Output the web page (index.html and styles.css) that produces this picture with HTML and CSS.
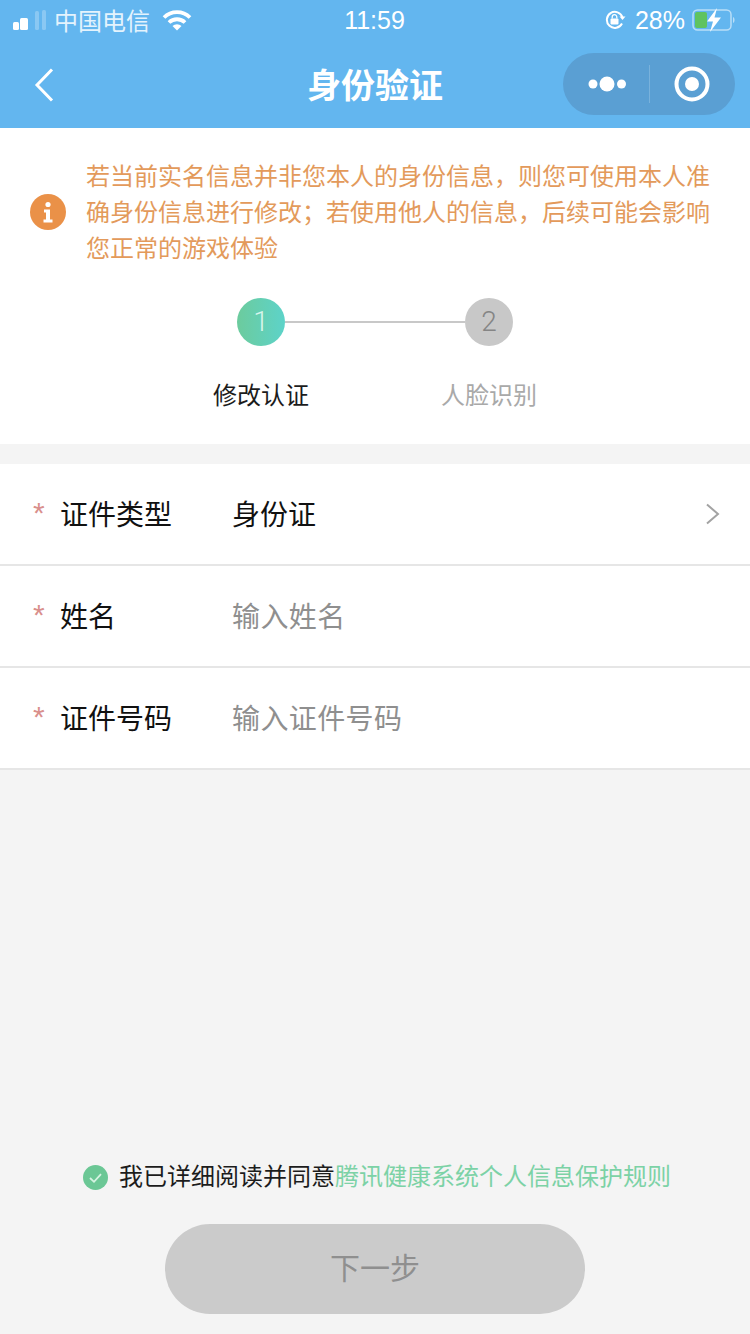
FILE: index.html
```html
<!DOCTYPE html>
<html>
	<head>
		<meta charset="utf-8">
		<title>身份验证</title>
		<link rel="stylesheet" href="styles.css">
	</head>
	<body>
		<div class="page">
			<header class="top">
				<div class="status">
					<div class="status-left">
						<svg class="signal" width="33" height="20" viewBox="0 0 33 20">
							<rect x="0" y="12" width="6" height="8" rx="1.5" fill="#fff"/>
							<rect x="7" y="8" width="8" height="12" rx="1.5" fill="#fff"/>
							<rect x="22" y="1" width="4" height="19" rx="1.5" fill="#fff" opacity=".25"/>
							<rect x="29" y="0" width="4" height="20" rx="1.5" fill="#fff" opacity=".25"/>
						</svg>
						<span class="carrier">中国电信</span>
						<svg class="wifi" width="30" height="22" viewBox="0 0 30 22">
							<path d="M2 8.500a18.500 18.500 0 0 1 26 0" fill="none" stroke="#fff" stroke-width="3.800"/>
							<path d="M7 13.500a11.500 11.500 0 0 1 16 0" fill="none" stroke="#fff" stroke-width="3.800"/>
							<path d="M15 21.500l-4.500-4.500a6.400 6.400 0 0 1 9 0z" fill="#fff"/>
						</svg>
					</div>
					<div class="clock">11:59</div>
					<div class="status-right">
						<svg class="lock" width="22" height="20" viewBox="0 0 22 20">
							<path d="M18 13.500a8 8 0 1 1 .5-6" fill="none" stroke="#fff" stroke-width="2"/>
							<path d="M15.500 6.500h6l-3 3.500z" fill="#fff"/>
							<rect x="6.500" y="8.500" width="8" height="6" rx="1" fill="#fff"/>
							<path d="M8.200 8.500v-1.500a2.300 2.300 0 0 1 4.600 0v1.500" fill="none" stroke="#fff" stroke-width="1.300"/>
						</svg>
						<span class="percent">28%</span>
						<svg class="battery" width="44" height="24" viewBox="0 0 44 24">
							<rect x="1" y="2" width="38" height="20" rx="4.500" fill="none" stroke="#fff" stroke-opacity=".55" stroke-width="1.500"/>
							<rect x="3" y="4" width="12" height="16" rx="2" fill="#5fc35f"/>
							<path d="M41 9c2 .5 2 5.500 0 6z" fill="#fff" fill-opacity=".55"/>
							<path d="M25 0l-10 13.500h6l-3 10.500 11-14.500h-6.500z" fill="#fff"/>
						</svg>
					</div>
				</div>
				<nav class="navbar">
					<div class="nav-left">
						<svg class="back" width="20" height="34" viewBox="0 0 20 34">
							<path d="M18 1.500L3 17l15 15.500" fill="none" stroke="#fff" stroke-width="3"/>
						</svg>
					</div>
					<h1 class="nav-title">身份验证</h1>
					<div class="nav-right">
						<div class="capsule">
							<svg class="capsule-more" width="40" height="18" viewBox="0 0 40 18">
								<circle cx="5" cy="9" r="4.500" fill="#fff"/>
								<circle cx="19" cy="9" r="7.500" fill="#fff"/>
								<circle cx="33.500" cy="9" r="4.500" fill="#fff"/>
							</svg>
							<span class="capsule-line"></span>
							<svg class="capsule-target" width="36" height="36" viewBox="0 0 36 36">
								<circle cx="18" cy="18" r="15.500" fill="none" stroke="#fff" stroke-width="4"/>
								<circle cx="18" cy="18" r="7" fill="#fff"/>
							</svg>
						</div>
					</div>
				</nav>
			</header>

			<section class="intro">
				<div class="notice">
					<svg class="notice-icon" width="36" height="36" viewBox="0 0 36 36">
						<circle cx="18" cy="18" r="18" fill="#ea9148"/>
						<circle cx="18" cy="10.500" r="2.600" fill="#fff"/>
						<path d="M14 15.500h6v10h2.500v3h-9v-3H16v-7h-2z" fill="#fff"/>
					</svg>
					<p class="notice-text">若当前实名信息并非您本人的身份信息，则您可使用本人准确身份信息进行修改；若使用他人的信息，后续可能会影响您正常的游戏体验</p>
				</div>
				<div class="steps">
					<div class="step-track">
						<span class="step-num step-on">1</span>
						<span class="step-line"></span>
						<span class="step-num">2</span>
					</div>
					<div class="step-labels">
						<span class="step-label step-label-on">修改认证</span>
						<span class="step-label">人脸识别</span>
					</div>
				</div>
			</section>

			<section class="form">
				<div class="row">
					<span class="star">*</span>
					<span class="row-label">证件类型</span>
					<span class="row-value">身份证</span>
					<svg class="row-arrow" width="15" height="22" viewBox="0 0 15 22">
						<path d="M2 1.500L13 11 2 20.500" fill="none" stroke="#a3a3a3" stroke-width="2"/>
					</svg>
				</div>
				<div class="row">
					<span class="star">*</span>
					<span class="row-label">姓名</span>
					<span class="row-value row-hint">输入姓名</span>
				</div>
				<div class="row">
					<span class="star">*</span>
					<span class="row-label">证件号码</span>
					<span class="row-value row-hint">输入证件号码</span>
				</div>
			</section>

			<footer class="bottom">
				<div class="agree">
					<svg class="agree-check" width="25" height="25" viewBox="0 0 25 25">
						<circle cx="12.500" cy="12.500" r="12.500" fill="#6bc795"/>
						<path d="M7 13l4 3.800 7-7.600" fill="none" stroke="#d6f3e2" stroke-width="1.800"/>
					</svg>
					<span class="agree-text">我已详细阅读并同意<span class="agree-link">腾讯健康系统个人信息保护规则</span></span>
				</div>
				<div class="next-btn">下一步</div>
			</footer>
		</div>
	</body>
</html>
```

FILE: styles.css
```css
body {
	margin: 0;
	font-family: "Noto Sans CJK SC", "Liberation Sans", sans-serif;
	background-color: #f4f4f4;
}

svg {
	display: block;
	flex-shrink: 0;
}

.page {
	display: flex;
	flex-direction: column;
	height: 1334px;
	overflow: hidden;
}

/* top bar */
.top {
	height: 128px;
	background-color: #63b6ef;
	color: white;
}

.status {
	display: grid;
	grid-template-columns: 1fr auto 1fr;
	align-items: center;
	height: 40px;
	padding: 0 14px 0 13px;
	font-size: 24px;
	line-height: 38px;
}

.status-left {
	display: flex;
	align-items: center;
}

.signal {
	margin-right: 9px;
}

.carrier {
	margin-left: -1px;
	color: #e4f3fd;
}

.wifi {
	margin-left: 12px;
}

.clock {
	font-family: "Liberation Sans", sans-serif;
	font-size: 25px;
}

.status-right {
	display: flex;
	align-items: center;
	justify-content: flex-end;
}

.percent {
	margin: 0 7px 0 9px;
	font-family: "Liberation Sans", sans-serif;
	font-size: 25px;
}

.navbar {
	display: grid;
	grid-template-columns: 1fr auto 1fr;
	align-items: center;
	height: 88px;
	padding: 0 15px;
}

.back {
	margin: 2px 0 0 19px;
}

.nav-title {
	margin: 0;
	font-size: 34px;
	line-height: 86px;
	font-weight: 700;
}

.nav-right {
	display: flex;
	justify-content: flex-end;
}

.capsule {
	display: flex;
	align-items: center;
	box-sizing: border-box;
	width: 172px;
	height: 62px;
	padding-left: 25px;
	border-radius: 31px;
	background-color: #5a9fd3;
}

.capsule-line {
	width: 1px;
	height: 38px;
	margin: 0 24px 0 21px;
	background-color: #79b2dc;
}

/* notice and steps */
.intro {
	box-sizing: border-box;
	height: 316px;
	padding-top: 29px;
	background-color: white;
}

.notice {
	display: flex;
	align-items: center;
	gap: 20px;
	padding-left: 30px;
}

.notice-icon {
	margin-top: 2px;
}

.notice-text {
	width: 624px;
	margin: 0;
	font-size: 24px;
	line-height: 36px;
	color: #e39a5b;
}

.steps {
	display: flex;
	flex-direction: column;
	align-items: center;
	margin-top: 33px;
}

.step-track {
	display: flex;
	align-items: center;
	width: 276px;
}

.step-num {
	width: 48px;
	height: 48px;
	border-radius: 50%;
	background-color: #c8c8c8;
	font-family: Roboto, sans-serif;
	font-size: 28px;
	font-weight: 300;
	line-height: 48px;
	text-align: center;
	color: #858585;
}

.step-on {
	background: linear-gradient(90deg, #6ccb9d, #5dd3c9);
	color: #d8f5ec;
}

.step-line {
	flex: 1;
	height: 2px;
	background-color: #c8c8c8;
}

.step-labels {
	display: flex;
	gap: 132px;
	margin-top: 31px;
}

.step-label {
	font-size: 24px;
	line-height: 34px;
	color: #a9a9a9;
}

.step-label-on {
	color: #1c1c1c;
}

/* form */
.form {
	margin-top: 20px;
	background-color: white;
}

.row {
	display: flex;
	align-items: center;
	box-sizing: border-box;
	height: 102px;
	padding: 0 30px 2px 33px;
	border-bottom: 2px solid #e6e6e6;
	font-size: 28px;
}

.star {
	width: 27px;
	font-family: "Liberation Sans", sans-serif;
	font-size: 30px;
	color: #d98f8c;
}

.row-label {
	width: 172px;
	color: #111;
}

.row-value {
	flex: 1;
	color: #111;
}

.row-hint {
	letter-spacing: .4px;
	color: #8f8f8f;
}

.row-arrow {
	margin-top: 2px;
}

/* bottom */
.bottom {
	display: flex;
	flex-direction: column;
	align-items: center;
	margin-top: auto;
	padding-bottom: 20px;
}

.agree {
	display: flex;
	align-items: center;
	gap: 11px;
	margin: 0 0 31px 4px;
}

.agree-check {
	margin-top: 4px;
}

.agree-text {
	font-size: 24px;
	line-height: 36px;
	color: #1c1c1c;
}

.agree-link {
	color: #7cd2a6;
}

.next-btn {
	width: 420px;
	height: 90px;
	border-radius: 45px;
	background-color: #cbcbcb;
	font-size: 30px;
	line-height: 84px;
	text-align: center;
	color: #8f8f8f;
}
```
